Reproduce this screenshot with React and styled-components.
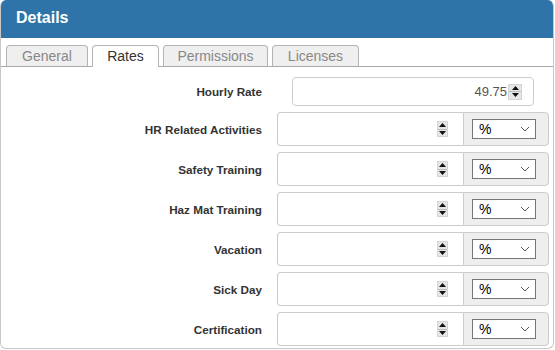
import React from 'react'
import styled, { createGlobalStyle } from 'styled-components'

const Global = createGlobalStyle`
  * {
    margin: 0;
    padding: 0;
    box-sizing: border-box;
  }
  body {
    font-family: "Liberation Sans", Arial, sans-serif;
    background: #fff;
  }
`

const Panel = styled.div`
  width: 554px;
  height: 349px;
  border: 1px solid #c8c8c8;
  border-top: none;
  border-radius: 6px;
  overflow: hidden;
  display: flex;
  flex-direction: column;
`

const Header = styled.div`
  height: 38px;
  background: #2e74a8;
  color: #fff;
  font-weight: bold;
  font-size: 16px;
  padding: 9px 0 0 15px;
`

const TabBar = styled.div`
  display: flex;
  gap: 4px;
  padding: 7px 0 0 5px;
  border-bottom: 1px solid #a9a9a9;
`

const Tab = styled.div`
  width: ${p => p.w}px;
  border: 1px solid #b4b4b4;
  border-bottom: none;
  border-radius: 4px 4px 0 0;
  background: ${p => (p.active ? '#fff' : '#efefef')};
  color: ${p => (p.active ? '#333' : '#888')};
  font-size: 14px;
  text-align: center;
  line-height: 20px;
  margin-bottom: ${p => (p.active ? '-1px' : '0')};
  height: ${p => (p.active ? '22px' : '21px')};
`

const Form = styled.div`
  display: flex;
  flex-direction: column;
  gap: 6px;
  padding-top: 10px;
`

const Row = styled.div`
  display: grid;
  grid-template-columns: 261px 1fr;
  column-gap: 15px;
  align-items: center;
`

const Label = styled.div`
  text-align: right;
  font-weight: bold;
  font-size: 11.7px;
  color: #333;
`

const RateBox = styled.div`
  margin-left: 15px;
  width: 242px;
  height: 29px;
  border: 1px solid #ccc;
  border-radius: 4px;
  display: flex;
  align-items: center;
  justify-content: flex-end;
  padding-right: 11px;
  gap: 1px;
  font-size: 13px;
  color: #555;
`

const Group = styled.div`
  display: flex;
  width: 272px;
  height: 34px;
`

const NumField = styled.div`
  flex: 1;
  border: 1px solid #ccc;
  border-right: none;
  border-radius: 4px 0 0 4px;
  display: flex;
  align-items: center;
  justify-content: flex-end;
  padding-right: 15px;
`

const Addon = styled.div`
  width: 86px;
  background: #eee;
  border: 1px solid #ccc;
  border-radius: 0 4px 4px 0;
  display: flex;
  align-items: center;
  padding-left: 8px;
`

const Select = styled.div`
  width: 64px;
  height: 20px;
  border: 1px solid #767676;
  background: #fff;
  display: flex;
  align-items: center;
  justify-content: space-between;
  padding: 0 5px 0 6px;
  font-size: 14px;
  color: #000;
`

const Spin = styled.div`
  width: ${p => p.w}px;
  height: ${p => p.h}px;
  display: flex;
  flex-direction: column;
  background: #e6e6e6;
  border: 1px solid #d4d4d4;
`

const SpinHalf = styled.div`
  flex: 1;
  display: flex;
  align-items: center;
  justify-content: center;
  & + & {
    border-top: 1px solid #bdbdbd;
  }
`

const Spinner = ({ w = 11, h = 16 }) => (
  <Spin w={w} h={h}>
    <SpinHalf>
      <svg width="7" height="4" viewBox="0 0 7 4"><path d="M3.5 0 L7 4 L0 4 Z" fill="#111" /></svg>
    </SpinHalf>
    <SpinHalf>
      <svg width="7" height="4" viewBox="0 0 7 4"><path d="M0 0 L7 0 L3.5 4 Z" fill="#111" /></svg>
    </SpinHalf>
  </Spin>
)

const Chevron = () => (
  <svg width="10" height="6" viewBox="0 0 10 6">
    <path d="M1 1 L5 5 L9 1" fill="none" stroke="#555" strokeWidth="1" />
  </svg>
)

const fields = ['HR Related Activities', 'Safety Training', 'Haz Mat Training', 'Vacation', 'Sick Day', 'Certification']

export default function App() {
  return (
    <>
      <Global />
      <Panel>
        <Header>Details</Header>
        <TabBar>
          <Tab w={82}>General</Tab>
          <Tab w={67} active>Rates</Tab>
          <Tab w={105}>Permissions</Tab>
          <Tab w={87}>Licenses</Tab>
        </TabBar>
        <Form>
          <Row>
            <Label>Hourly Rate</Label>
            <RateBox>
              49.75
              <Spinner w={14} h={16} />
            </RateBox>
          </Row>
          {fields.map(f => (
            <Row key={f}>
              <Label>{f}</Label>
              <Group>
                <NumField>
                  <Spinner />
                </NumField>
                <Addon>
                  <Select>
                    %
                    <Chevron />
                  </Select>
                </Addon>
              </Group>
            </Row>
          ))}
        </Form>
      </Panel>
    </>
  )
}
